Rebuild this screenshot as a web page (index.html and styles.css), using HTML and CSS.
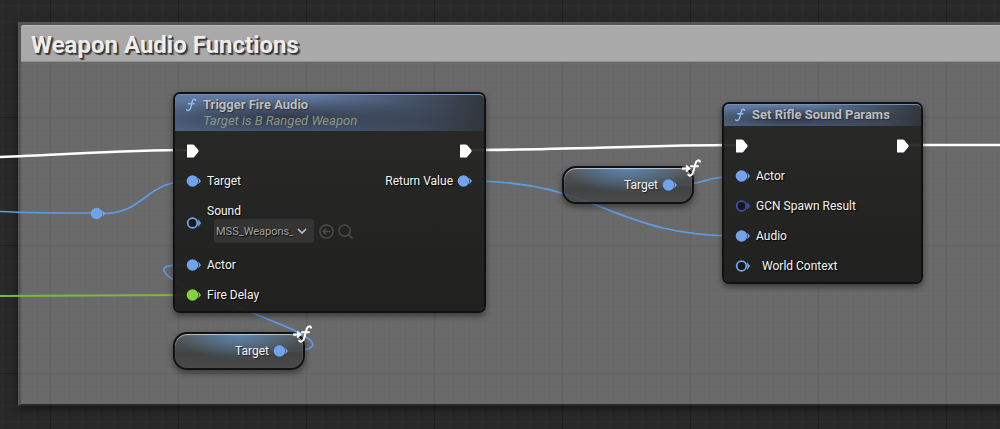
FILE: index.html
```
<!DOCTYPE html>
<html lang="en">
<head>
    <meta charset="UTF-8">
    <meta name="viewport" content="width=device-width, initial-scale=1.0">
    <title>Weapon Audio Functions</title>
    <link rel="stylesheet" href="styles.css">
</head>
<body>

    <!-- shared shapes -->
    <svg class="symbols" aria-hidden="true">
        <symbol id="exec" viewBox="0 0 13 14">
            <path d="M1.6 0.4H6.600Q7.600 0.4 8.200 1.1L12.300 6.1Q12.900 7 12.300 7.9L8.200 12.9Q7.600 13.6 6.600 13.6H1.6Q1 13.6 1 13V1Q1 0.4 1.6 0.4Z" fill="#fff"/>
        </symbol>
        <symbol id="pin" viewBox="0 0 15 12">
            <circle cx="6.5" cy="6" r="5.8" fill="currentColor"/>
            <path d="M12.2 2.5L15 6L12.2 9.5Q13.4 6 12.2 2.5Z" fill="currentColor"/>
        </symbol>
        <symbol id="pin-open" viewBox="0 0 15 12">
            <circle cx="6.5" cy="6" r="4.8" fill="#151719" stroke="currentColor" stroke-width="1.8"/>
            <path d="M12.2 2.5L15 6L12.2 9.5Q13 6 12.2 2.5Z" fill="currentColor" stroke="currentColor" stroke-width="0.4"/>
        </symbol>
        <symbol id="func" viewBox="0 0 12 14">
            <path d="M10.6 2.3C10.3 0.9 8.3 0.9 7.6 2.8C6.8 5 6.2 8.4 5.3 10.6C4.5 12.6 2.5 13 1.7 11.8M3.6 5.7H8.9" fill="none" stroke="currentColor" stroke-width="1.4" stroke-linecap="round"/>
        </symbol>
        <symbol id="func-arrow" viewBox="0 0 20 18">
            <path d="M0 9.5H5" stroke="#fff" stroke-width="2.2"/>
            <path d="M4 5.5L9 9.5L4 13.5Z" fill="#fff"/>
            <path d="M18 2.7C17.5 0.7 14.8 1 13.9 3.4C12.9 6.2 12.2 10.2 11 13.6C10 16.5 7.5 17.500 6.3 15.7M9 7.3H16" fill="none" stroke="#fff" stroke-width="2" stroke-linecap="round"/>
        </symbol>
    </svg>

    <main class="graph">
        <section class="comment">
            <h1>Weapon Audio Functions</h1>
        </section>

        <svg class="wires" aria-hidden="true">
            <g class="wire-exec">
                <path d="M0 157C60 155 125 150 188 150"/>
                <path d="M470 150C560 150 650 145 737 145"/>
                <path d="M906 145H4000"/>
            </g>
            <g class="wire-object">
                <path d="M0 211.5C30 213 60 213 92 213"/>
                <path d="M104 213.5C145 213 145 181 190 181"/>
                <path d="M470 181C600 181 610 236 738 236"/>
                <path d="M675 185C705 185 706 176 738 176"/>
                <path d="M286 351C311 351 316 347 311 341C306 334 280 324 250 312C220 300 170 284 164 271C162 265 173 265 190 265"/>
                <circle cx="96.5" cy="213.5" r="5.8"/>
                <path class="tip" d="M102.2 210L105.500 213.5L102.2 217Q103.4 213.5 102.2 210Z"/>
            </g>
            <g class="wire-float">
                <path d="M0 296C60 296 120 295 190 295"/>
            </g>
        </svg>

        <article class="node node-trigger">
            <header>
                <svg class="func"><use href="#func"/></svg>
                <div>
                    <h2>Trigger Fire Audio</h2>
                    <p>Target is B Ranged Weapon</p>
                </div>
            </header>
            <div class="pins">
                <ul>
                    <li class="flow"><svg class="exec"><use href="#exec"/></svg></li>
                    <li><svg class="pin"><use href="#pin"/></svg>Target</li>
                    <li class="asset">
                        <svg class="pin"><use href="#pin-open"/></svg>
                        <div>
                            <label for="sound">Sound</label>
                            <div class="picker">
                                <span class="dropdown">
                                    <select id="sound">
                                        <option>MSS_Weapons_Rifle_Fire</option>
                                    </select>
                                    <svg class="chevron" viewBox="0 0 10 6"><path d="M1 1L5 5L9 1"/></svg>
                                </span>
                                <button type="button" aria-label="Use selected asset">
                                    <svg viewBox="0 0 16 16"><circle cx="8" cy="8" r="7"/><path d="M12 8H4.8M7.6 4.8L4.4 8L7.6 11.2"/></svg>
                                </button>
                                <button type="button" aria-label="Browse to asset">
                                    <svg viewBox="0 0 16 16"><circle cx="7" cy="7" r="6"/><path d="M11.2 11.2L15.5 15.5"/></svg>
                                </button>
                            </div>
                        </div>
                    </li>
                    <li><svg class="pin"><use href="#pin"/></svg>Actor</li>
                    <li><svg class="pin float"><use href="#pin"/></svg>Fire Delay</li>
                </ul>
                <ul class="outputs">
                    <li class="flow"><svg class="exec"><use href="#exec"/></svg></li>
                    <li>Return Value<svg class="pin"><use href="#pin"/></svg></li>
                </ul>
            </div>
        </article>

        <article class="node node-params">
            <header>
                <svg class="func"><use href="#func"/></svg>
                <h2>Set Rifle Sound Params</h2>
            </header>
            <div class="pins">
                <ul>
                    <li class="flow"><svg class="exec"><use href="#exec"/></svg></li>
                    <li><svg class="pin"><use href="#pin"/></svg>Actor</li>
                    <li><svg class="pin struct"><use href="#pin-open"/></svg>GCN Spawn Result</li>
                    <li><svg class="pin"><use href="#pin"/></svg>Audio</li>
                    <li class="context"><svg class="pin"><use href="#pin-open"/></svg>World Context</li>
                </ul>
                <ul class="outputs">
                    <li class="flow"><svg class="exec"><use href="#exec"/></svg></li>
                </ul>
            </div>
        </article>

        <div class="getter getter-top">
            Target<svg class="pin"><use href="#pin"/></svg>
            <svg class="badge"><use href="#func-arrow"/></svg>
        </div>

        <div class="getter getter-bottom">
            Target<svg class="pin"><use href="#pin"/></svg>
            <svg class="badge"><use href="#func-arrow"/></svg>
        </div>
    </main>

</body>
</html>
```
FILE: styles.css
```
* {
    box-sizing: border-box;
}
body {
    margin: 0;
    font-family: Roboto, sans-serif;
    font-size: 12px;
    color: #f4f4f4;
    background-color: #292929;
}
h1, h2, p, ul {
    margin: 0;
    padding: 0;
}
svg {
    display: block;
    flex: none;
}
.symbols {
    position: absolute;
    width: 0;
    height: 0;
}

/* canvas with the small and large grid */
.graph {
    position: relative;
    min-height: 100vh;
    overflow: hidden;
    background-color: #292929;
    background-image:
        linear-gradient(to right, #202020 1px, transparent 1px),
        linear-gradient(to bottom, #202020 1px, transparent 1px),
        linear-gradient(to right, #2d2d2d 1px, transparent 1px),
        linear-gradient(to bottom, #2d2d2d 1px, transparent 1px);
    background-size: 128px 128px, 128px 128px, 16px 16px, 16px 16px;
    background-position: 50px 117px, 50px 117px, 2px 5px, 2px 5px;
}

.comment {
    position: absolute;
    left: 18px;
    right: -20px;
    top: 22px;
    height: 384px;
    border: 3px solid rgba(255, 255, 255, 0.2);
    border-bottom: 2px solid #292929;
    background-color: rgba(255, 255, 255, 0.3);
    background-clip: padding-box;
    box-shadow: 0 3px 8px rgba(0, 0, 0, 0.5);
}
.comment h1 {
    height: 37px;
    padding-left: 10px;
    border-top: 1px solid #bcbcbc;
    border-bottom: 1px solid #8f8f8f;
    border-radius: 3px 0 0 0;
    background-color: #a9a9a9;
    font-size: 24px;
    line-height: 38px;
    color: #ededed;
    text-shadow: 1px 1px 1px #333, 2px 2px 1px #444;
}

.wires {
    position: absolute;
    left: 0;
    top: 0;
    width: 100%;
    height: 100%;
    fill: none;
}
.wire-exec {
    stroke: #fff;
    stroke-width: 2.6;
}
.wire-object {
    stroke: #5f9be4;
    stroke-width: 1.7;
}
.wire-object circle, .wire-object .tip {
    fill: #72a3ea;
    stroke: none;
}
.wire-float {
    stroke: #7cb93c;
    stroke-width: 1.9;
}

.node {
    position: absolute;
    border: 2px solid #111;
    border-radius: 7px;
    background: linear-gradient(rgba(36, 36, 34, 0.93), rgba(27, 27, 26, 0.93));
    background-clip: padding-box;
    box-shadow: 0 3px 6px rgba(0, 0, 0, 0.45);
}
.node-trigger {
    left: 173px;
    top: 92px;
    width: 313px;
}
.node-params {
    left: 722px;
    top: 102px;
    width: 201px;
}
.node header {
    display: flex;
    gap: 6px;
    padding: 2px 10px 3px;
    border-top: 1px solid #7290ba;
    border-radius: 5px 5px 0 0;
    background:
        radial-gradient(ellipse 55% 60% at 35% 65%, rgba(35, 42, 52, 0.8), transparent),
        linear-gradient(to right, transparent 45%, rgba(42, 44, 46, 0.85)),
        linear-gradient(#6079a0, #566a89);
}
.node h2 {
    font-size: 13px;
    line-height: 16px;
    color: #bbbcbe;
    text-shadow: 1px 1px 1px #2a2f38;
}
.node header p {
    font-size: 13px;
    font-style: italic;
    line-height: 15px;
    color: #8a957f;
}
.func {
    width: 12px;
    height: 14px;
    margin-top: 1px;
    color: #8fbdf5;
}

.pins {
    display: flex;
    justify-content: space-between;
    padding: 4px 12px 1px 11px;
}
.pins ul {
    list-style: none;
}
.pins li {
    display: flex;
    align-items: center;
    gap: 6px;
    height: 30px;
    white-space: nowrap;
    text-shadow: 1px 1px 1px #000;
}
.pins .flow {
    height: 31px;
}
.pins .outputs li {
    justify-content: flex-end;
    gap: 4px;
}
.pins .asset {
    height: 54px;
}
.pins .context {
    gap: 12px;
}
.exec {
    width: 13px;
    height: 14px;
}
.pin {
    width: 15px;
    height: 12px;
    color: #72a3ea;
}
.pin.float {
    color: #86cf43;
}
.pin.struct {
    color: #3f4fb0;
}

.asset label {
    display: block;
    line-height: 16px;
}
.picker {
    display: flex;
    align-items: center;
    gap: 4px;
    margin-left: 7px;
}
.dropdown {
    position: relative;
    margin-right: 1px;
}
.dropdown select {
    display: block;
    width: 100px;
    height: 24px;
    padding: 0 21px 0 2px;
    border: none;
    border-radius: 3px;
    appearance: none;
    background-color: #343434;
    font-family: inherit;
    font-size: 11px;
    color: #a3a3a3;
    text-shadow: 1px 1px 1px #000;
}
.chevron {
    position: absolute;
    right: 7px;
    top: 9px;
    width: 10px;
    height: 6px;
    fill: none;
    stroke: #c0c0c0;
    stroke-width: 1.6;
    pointer-events: none;
}
.picker button {
    padding: 0;
    border: none;
    background: none;
    cursor: pointer;
}
.picker button svg {
    width: 15px;
    height: 15px;
    fill: none;
    stroke: #4d4d4c;
    stroke-width: 1.5;
}

.getter {
    position: absolute;
    display: flex;
    align-items: center;
    justify-content: flex-end;
    gap: 4px;
    width: 132px;
    height: 38px;
    padding-right: 15px;
    border: 2px solid #111;
    border-radius: 14px;
    background:
        radial-gradient(ellipse 50% 75% at 50% 0, rgba(92, 142, 190, 0.85), transparent),
        linear-gradient(rgba(85, 87, 88, 0.85), rgba(58, 60, 61, 0.85) 60%, rgba(68, 68, 68, 0.85));
    background-clip: padding-box;
    box-shadow: inset 0 1px 1px rgba(255, 255, 255, 0.6), 0 3px 6px rgba(0, 0, 0, 0.45);
    text-shadow: 1px 1px 1px #222;
}
.getter-top {
    left: 562px;
    top: 166px;
}
.getter-bottom {
    left: 173px;
    top: 332px;
}
.badge {
    position: absolute;
    right: -10px;
    top: -9px;
    width: 20px;
    height: 18px;
}
```
